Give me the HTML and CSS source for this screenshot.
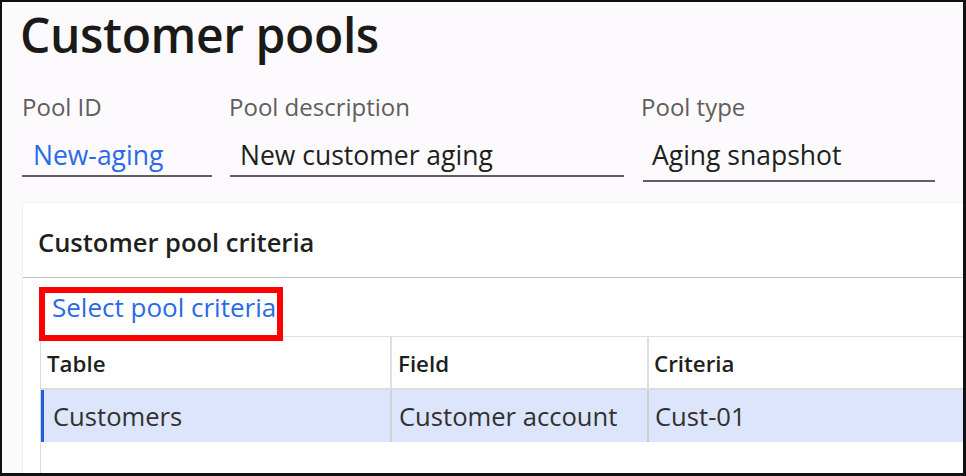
FILE: index.html
```html
<!DOCTYPE html>
<html lang="en">
<head>
<meta charset="utf-8">
<title>Customer pools</title>
<link rel="stylesheet" href="styles.css">
</head>
<body>
<div class="frame">
  <h1 class="title">Customer pools</h1>
  <div class="fields">
    <div class="field f1">
      <div class="label">Pool ID</div>
      <div class="input link">New-aging</div>
    </div>
    <div class="field f2">
      <div class="label">Pool description</div>
      <div class="input">New customer aging</div>
    </div>
    <div class="field f3">
      <div class="label">Pool type</div>
      <div class="input">Aging snapshot</div>
    </div>
  </div>
  <section class="card">
    <div class="card-head">Customer pool criteria</div>
    <div class="card-body">
      <div class="toolbar"><a class="action">Select pool criteria</a></div>
      <div class="grid">
        <div class="row head">
          <div class="cell c1">Table</div>
          <div class="cell c2">Field</div>
          <div class="cell c3">Criteria</div>
        </div>
        <div class="row sel">
          <div class="cell c1">Customers</div>
          <div class="cell c2">Customer account</div>
          <div class="cell c3">Cust-01</div>
        </div>
      </div>
    </div>
    <div class="highlight"></div>
  </section>
</div>
</body>
</html>
```
FILE: styles.css
```css
* { box-sizing: border-box; }
html, body { margin: 0; padding: 0; }
body {
  font-family: "Open Sans", "Noto Sans", sans-serif;
  color: #201f1e;
  background: #ffffff;
}
.frame {
  width: 966px;
  height: 476px;
  border: 2px solid #111;
  border-right-width: 3px;
  border-bottom-width: 3px;
  background: #fcfafc;
  padding-left: 20px;
  display: flex;
  flex-direction: column;
  overflow: hidden;
}
.title {
  margin: 0 0 0 -2px;
  font-size: 48px;
  line-height: 66px;
  font-weight: 600;
  color: #1b1a19;
  letter-spacing: -0.4px;
}
.fields {
  display: flex;
  align-items: flex-start;
  gap: 17px;
  margin-top: 22px;
}
.f1 { width: 190px; }
.f2 { width: 395px; }
.f3 { width: 294px; }
.label {
  font-size: 24px;
  line-height: 33px;
  color: #605e5c;
}
.input {
  margin-top: 14px;
  font-size: 26.5px;
  line-height: 36px;
  color: #201f1e;
  padding: 0 0 2px 11px;
  border-bottom: 2px solid #5f5f5f;
}
.f2 .input { padding-left: 10px; margin-left: 1px; }
.f3 .input { padding-left: 9px; margin-left: 2px; padding-bottom: 7px; }
.input.link { color: #2b6ae6; }
.card {
  position: relative;
  flex: 1;
  margin: 21px -30px 0 1px;
  background: #ffffff;
  box-shadow: 0 0 2px rgba(0, 0, 0, 0.14);
  display: flex;
  flex-direction: column;
}
.card-head {
  padding: 22px 0 18px 15px;
  font-size: 25.5px;
  line-height: 34px;
  font-weight: 600;
  color: #201f1e;
  border-bottom: 1px solid #c4c2c0;
}
.card-body {
  flex: 1;
  padding-left: 17px;
  display: flex;
  flex-direction: column;
}
.toolbar {
  padding: 12px 0 12px 12px;
}
.action {
  font-size: 26px;
  line-height: 34px;
  color: #2b6ae6;
  text-decoration: none;
  display: inline-block;
}
.grid {
  flex: 1;
  border-left: 1px solid #dcdad8;
  border-top: 1px solid #e1dfdd;
}
.row { display: flex; }
.row.head {
  border-bottom: 2px solid #dedcda;
}
.cell { flex: none; }
.c1 { width: 351px; border-right: 2px solid #e1dfdd; }
.c2 { width: 257px; border-right: 2px solid #e1dfdd; }
.c3 { flex: 1; }
.head .cell {
  font-size: 22.3px;
  line-height: 30px;
  font-weight: 600;
  color: #201f1e;
  padding: 12px 0 9px 6px;
}
.head .c3 { padding-left: 5px; }
.sel { background: #dde5fc; }
.sel .cell {
  font-size: 25.6px;
  line-height: 34px;
  color: #323130;
  padding: 10px 0 8px 8px;
}
.sel .c1 {
  padding-left: 12px;
  box-shadow: inset 3px 0 0 #1f5fdc;
  border-right-color: #d2d0ce;
}
.sel .c2 { border-right-color: #d2d0ce; padding-left: 7px; }
.sel .c3 { padding-left: 6px; }
.highlight {
  position: absolute;
  left: 16px;
  top: 84px;
  width: 244px;
  height: 54px;
  border: 6px solid #ff0000;
}
```
